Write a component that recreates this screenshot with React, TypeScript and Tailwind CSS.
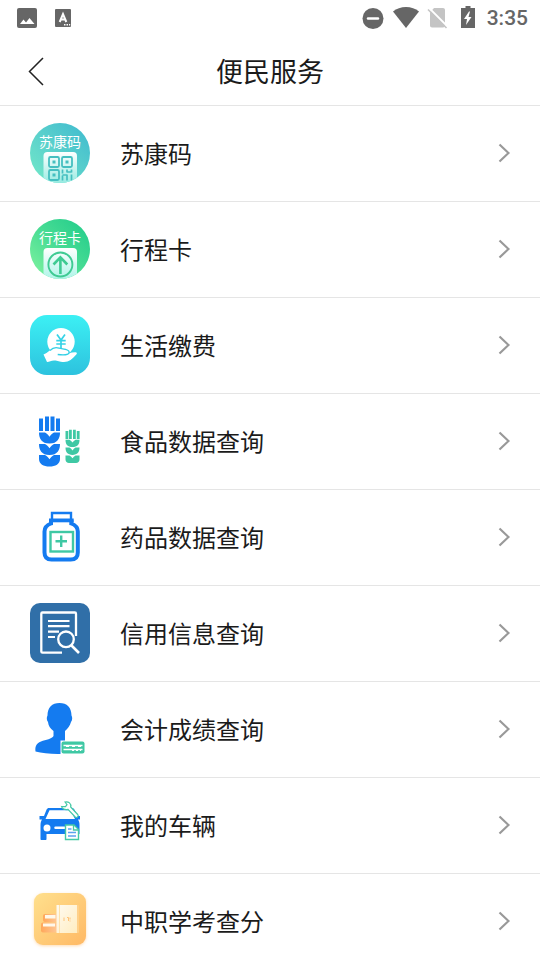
import React from "react";

function HealthCodeIcon() {
  return (
    <svg viewBox="0 0 60 60" className="size-[60px]" aria-hidden="true">
      <defs>
        <linearGradient id="hc-bg" x1="0" y1="1" x2="1" y2="0">
          <stop offset="0" stopColor="#74eac8" />
          <stop offset="0.5" stopColor="#5ad0cc" />
          <stop offset="1" stopColor="#3db9cf" />
        </linearGradient>
        <linearGradient id="hc-card" x1="0" y1="0" x2="0" y2="1">
          <stop offset="0" stopColor="#ffffff" />
          <stop offset="1" stopColor="#8ee9df" />
        </linearGradient>
        <clipPath id="hc-clip"><circle cx="30" cy="30" r="30" /></clipPath>
      </defs>
      <g clipPath="url(#hc-clip)">
        <rect width="60" height="60" fill="url(#hc-bg)" />
        <rect x="13.5" y="29" width="33.5" height="34" rx="4" fill="url(#hc-card)" />
        <g fill="none" stroke="#45bfc0" strokeWidth="1.8">
          <rect x="19" y="34" width="10" height="10" rx="1.5" />
          <rect x="32" y="34" width="10" height="10" rx="1.5" />
          <rect x="19" y="47" width="10" height="10" rx="1.5" />
        </g>
        <g fill="#45bfc0">
          <rect x="22.5" y="37.5" width="3" height="3" />
          <rect x="35.5" y="37.5" width="3" height="3" />
          <rect x="22.5" y="50.5" width="3" height="3" />
        </g>
        <path d="M32.500 46.500v4m0 2v5M37 46.500v3m0 2v6M41.500 46.500v3m0 2v6M32.500 52H37M37 49h4.500" fill="none" stroke="#45bfc0" strokeWidth="1.700" />
      </g>
      <text x="30" y="24" textAnchor="middle" fontSize="14" fill="#fff" fontFamily="'Noto Sans CJK SC', sans-serif">苏康码</text>
    </svg>
  );
}

function TravelCardIcon() {
  return (
    <svg viewBox="0 0 60 60" className="size-[60px]" aria-hidden="true">
      <defs>
        <linearGradient id="tc-bg" x1="0" y1="1" x2="1" y2="0">
          <stop offset="0" stopColor="#84f5a0" />
          <stop offset="0.5" stopColor="#48dc94" />
          <stop offset="1" stopColor="#1fcb8a" />
        </linearGradient>
        <linearGradient id="tc-card" x1="0" y1="0" x2="0" y2="1">
          <stop offset="0" stopColor="#ffffff" />
          <stop offset="1" stopColor="#a6f3e6" />
        </linearGradient>
        <clipPath id="tc-clip"><circle cx="30" cy="30" r="30" /></clipPath>
      </defs>
      <g clipPath="url(#tc-clip)">
        <rect width="60" height="60" fill="url(#tc-bg)" />
        <rect x="13.5" y="29" width="33.5" height="34" rx="4" fill="url(#tc-card)" />
        <g fill="none" stroke="#3fcb93" strokeWidth="2.6">
          <circle cx="30.4" cy="45.5" r="12" strokeWidth="1.9" />
          <path d="M30.4 55V38.500M23.500 45.500l6.900-7.200 6.900 7.200" />
        </g>
      </g>
      <text x="30" y="24" textAnchor="middle" fontSize="14" fill="#fff" fontFamily="'Noto Sans CJK SC', sans-serif">行程卡</text>
    </svg>
  );
}

function PaymentIcon() {
  return (
    <svg viewBox="0 0 60 60" className="size-[60px]" aria-hidden="true">
      <defs>
        <linearGradient id="pay-bg" x1="0" y1="0" x2="0" y2="1">
          <stop offset="0" stopColor="#3cf0f4" />
          <stop offset="1" stopColor="#2dc2de" />
        </linearGradient>
      </defs>
      <rect width="60" height="60" rx="17" fill="url(#pay-bg)" />
      <circle cx="31" cy="26.8" r="13.7" fill="#fff" />
      <path d="M27 19.5l4 5.500 4-5.500M31 25v8M26.300 25.600h9.400M26.300 29h9.400" fill="none" stroke="#35d3e7" strokeWidth="1.7" />
      <path
        d="M13.500 39.500C18 38 20 33.500 25.500 33c4-.3 6 1.500 9.500 1.700 3 .2 4.500 1.500 4 3.500 2.500-.3 5-1.200 7.300-.7.800.3.700 1.200 0 2C42.500 44 39 47 34 47c-5 0-6.500-1.700-10-1.500-3 .2-4.500 1.500-7 1.500z"
        fill="#fff"
      />
      <path d="M20 35.500c3-3 6-3.300 9-2.300 3.500 1.100 10 .3 10.200 4 0 3-6 3-11.500 2.300" fill="none" stroke="#31cfe5" strokeWidth="1.300" />
    </svg>
  );
}

function FoodIcon() {
  return (
    <svg viewBox="0 0 60 60" className="size-[60px]" aria-hidden="true">
      <g fill="#147bf0">
        <path d="M9 7.500h4v12.500H9zM15 5.500h4v14.500h-4zM20.500 5.500h4v14.500h-4zM26 7.500h4v12.500h-4z" />
        <path d="M9 21.500h6c1.500 1 3.500 2.500 4.500 4.300 1-1.800 3-3.300 4.500-4.300h6c0 6-2.500 11-10.500 11S9 27.500 9 21.500z" />
        <path d="M9 33h6c1.500 1 3.500 2.500 4.500 4.300 1-1.800 3-3.300 4.500-4.300h6c0 6-2.500 11-10.500 11S9 39 9 33z" />
        <path d="M9 44h6c1.500 1 3.500 2.500 4.500 4.300 1-1.800 3-3.300 4.500-4.300h6v4c0 5-4.500 7.500-10.500 7.500S9 53 9 48z" />
      </g>
      <g fill="#3fc8a4">
        <path d="M35.500 20h2.800v8h-2.800zM39 18.700h2.800v9.300H39zM43 18.700h2.800v9.300H43zM46.800 20h2.800v8h-2.800z" />
        <path d="M35.500 28.700h4c1.200.7 2.200 1.600 3 2.900.8-1.300 1.800-2.200 3-2.900h4c0 4.800-2.200 7.300-7 7.300s-7-2.500-7-7.300z" />
        <path d="M35.500 36.600h4c1.200.7 2.200 1.600 3 2.900.8-1.300 1.800-2.200 3-2.900h4c0 4.800-2.200 7.300-7 7.300s-7-2.500-7-7.300z" />
        <path d="M35.500 44.400h4c1.200.7 2.200 1.600 3 2.900.8-1.300 1.800-2.200 3-2.900h4v4c0 2-1.500 3.500-3.500 3.500h-7c-2 0-3.500-1.500-3.500-3.500z" />
      </g>
    </svg>
  );
}

function MedicineIcon() {
  return (
    <svg viewBox="0 0 60 60" className="size-[60px]" aria-hidden="true">
      <path d="M22 12.500V6h19v6.500" fill="none" stroke="#147bf0" strokeWidth="2.400" />
      <path d="M19 11.500h24.700v3.800H19z" fill="#147bf0" />
      <path
        d="M21 13v3.500c-4 1.500-6.500 3.500-6.500 8v21c0 4.500 2.500 7 7 7h19.300c4.500 0 7-2.500 7-7v-21c0-4.500-2.500-6.500-6.500-8V13"
        fill="none" stroke="#147bf0" strokeWidth="4"
      />
      <rect x="20.5" y="25" width="22.500" height="19.500" fill="none" stroke="#3fc8a4" strokeWidth="2.400" />
      <path d="M31.200 28.500v11.500M25.500 34.300h11.500" stroke="#3fc8a4" strokeWidth="2.400" />
    </svg>
  );
}

function CreditIcon() {
  return (
    <svg viewBox="0 0 60 60" className="size-[60px]" aria-hidden="true">
      <rect width="60" height="60" rx="10" fill="#306fa8" />
      <g fill="none" stroke="#fff">
        <path d="M32 49.700H12.500c-.7 0-1.200-.5-1.200-1.200V10.700c0-.7.500-1.200 1.200-1.200h32.300c.7 0 1.200.5 1.200 1.200V33" strokeWidth="2.300" />
        <path d="M18 18h21.500M18 23.200h21.500M18 28.600h11M18 34h7" strokeWidth="2.200" />
        <circle cx="36" cy="36.300" r="7.800" strokeWidth="2.300" />
        <path d="M41.500 42.500l7.500 7.500" strokeWidth="2.600" />
      </g>
    </svg>
  );
}

function AccountantIcon() {
  return (
    <svg viewBox="0 0 60 60" className="size-[60px]" aria-hidden="true">
      <path
        d="M29.500 4C37 4 41.500 8.500 41.500 16.500c1 2 1 4.500-.5 6.500-1.200 4-3 6.500-6 9v9.500H30.500V55C21 55.300 12 54 5.500 52.500c-.5-5 .5-8 5.500-10 5-2 11-2.500 12.500-5.500v-5C20 29.500 18.500 27 18 23c-1.500-2-1.500-4.500-.5-6.500C17.500 8.500 22 4 29.500 4z"
        fill="#147bf0"
      />
      <rect x="31.500" y="42.500" width="23" height="12" rx="2" fill="#3fc8a4" />
      <path d="M33.500 46.500h19M33.500 50.500h19" stroke="#fff" strokeWidth="1.300" />
      <path d="M36 47.500h3m3 0h3m3 0h3M42 51.500h2m2 0h2m2 0h1" stroke="#fff" strokeWidth="1" />
    </svg>
  );
}

function VehicleIcon() {
  return (
    <svg viewBox="0 0 60 60" className="size-[60px]" aria-hidden="true">
      <path
        fillRule="evenodd" fill="#147bf0"
        d="M19 13h23c1 0 2 .6 2.500 1.700l3 6.300h2.500v3.500h-2c1 1.500 1.500 3 1.500 5.500v9h-33v5c0 .6-.4 1-1 1h-4c-.6 0-1-.4-1-1V30c0-2.300.5-3.700 1.500-5.500H9.500V21h4.500l2.500-6.300c.5-1.100 1.500-1.700 2.500-1.700zM19.500 15.300L15.500 24h29.500l-4.500-8.700z"
      />
      <circle cx="17" cy="33" r="3.500" fill="#fff" />
      <path d="M25.500 32.700h9" stroke="#fff" strokeWidth="2.500" strokeLinecap="round" />
      <path
        d="M31.500 11.500l4 .2 1.500-2-2-2.700c3.500-.8 6.500 1.500 5.700 5l7 7.500c1.500 1.700-.8 4-2.500 2.500l-7.200-7.700c-3 .7-6-.3-6.500-2.800z"
        fill="#fff" stroke="#45c9a5" strokeWidth="1.200"
      />
      <path d="M35.500 30h8.500l4.500 4.500v10h-13z" fill="#fff" stroke="#45c9a5" strokeWidth="1.400" />
      <path d="M43.500 30v5h5" fill="none" stroke="#45c9a5" strokeWidth="1.300" />
      <path d="M38 34h3.500M38 37.500h8M38 41h8" stroke="#5ca3f0" strokeWidth="1.300" />
    </svg>
  );
}

function ExamIcon() {
  return (
    <svg viewBox="0 0 60 60" className="size-[60px] overflow-visible" aria-hidden="true">
      <defs>
        <linearGradient id="exam-bg" x1="0" y1="0" x2="1" y2="1">
          <stop offset="0" stopColor="#ffe08d" />
          <stop offset="1" stopColor="#ffb965" />
        </linearGradient>
        <linearGradient id="exam-page" x1="0" y1="0" x2="1" y2="1">
          <stop offset="0" stopColor="#fffaf0" />
          <stop offset="1" stopColor="#ffedc2" />
        </linearGradient>
        <linearGradient id="exam-spine" x1="0" y1="0" x2="1" y2="0">
          <stop offset="0" stopColor="#ffa75a" />
          <stop offset="1" stopColor="#ffc795" />
        </linearGradient>
        <filter id="exam-shadow" x="-20%" y="-20%" width="140%" height="140%">
          <feDropShadow dx="0" dy="1" stdDeviation="1.500" floodColor="#ffb866" floodOpacity="0.5" />
        </filter>
      </defs>
      <rect x="4" y="2" width="52" height="52" rx="9" fill="url(#exam-bg)" filter="url(#exam-shadow)" />
      <rect x="13" y="23" width="14" height="8" rx="2" fill="url(#exam-spine)" />
      <path d="M15 24h10.500v3.500H15z" fill="#fff8ea" />
      <rect x="11" y="31.500" width="16" height="10" rx="2" fill="url(#exam-spine)" />
      <path d="M13 32.500h12v3H13z" fill="#fff8ea" />
      <rect x="45" y="14" width="4" height="28" rx="1" fill="#ffd08a" />
      <rect x="26.500" y="14" width="20.500" height="28" fill="url(#exam-page)" />
      <path d="M29.500 14v28" stroke="#ffe2ad" strokeWidth="1" />
      <path d="M34 26.500v3.500M37 26.500h1.500v3.500M40 26.500v2m0 1v1" fill="none" stroke="#ffc278" strokeWidth="1" />
    </svg>
  );
}

const services = [
  { name: "苏康码", Icon: HealthCodeIcon },
  { name: "行程卡", Icon: TravelCardIcon },
  { name: "生活缴费", Icon: PaymentIcon },
  { name: "食品数据查询", Icon: FoodIcon },
  { name: "药品数据查询", Icon: MedicineIcon },
  { name: "信用信息查询", Icon: CreditIcon },
  { name: "会计成绩查询", Icon: AccountantIcon },
  { name: "我的车辆", Icon: VehicleIcon },
  { name: "中职学考查分", Icon: ExamIcon },
];

function StatusBar() {
  return (
    <div className="flex h-9 items-center justify-between pr-3 pl-4 text-[#666666]">
      <div className="flex items-center gap-4">
        <svg viewBox="0 0 22 22" className="size-[22px]" aria-hidden="true">
          <rect x="1" y="1" width="20" height="20" rx="2" fill="currentColor" />
          <path d="M4 17l3.500-4.500 2.500 3L13.500 11l5 6z" fill="#fff" />
        </svg>
        <svg viewBox="0 0 18 18" className="size-[18px]" aria-hidden="true">
          <rect x="1" y="0" width="16" height="18" rx="1" fill="currentColor" />
          <path d="M5.700 13l3.300-8 3.300 8M7 10.500h4" fill="none" stroke="#fff" strokeWidth="2" />
          <path d="M10 15.800h1.500m1 0h1.500m1 0h1.200" stroke="#fff" strokeWidth="1.500" />
        </svg>
      </div>
      <div className="flex items-center gap-2">
        <svg viewBox="0 0 24 24" className="size-6" aria-hidden="true">
          <circle cx="12" cy="12.500" r="10.500" fill="currentColor" />
          <path d="M7 12.500h10" stroke="#fff" strokeWidth="2.400" strokeLinecap="round" />
        </svg>
        <svg viewBox="0 0 26 24" className="h-6 w-[26px]" aria-hidden="true">
          <path d="M0 5.500C3.500 2.500 8 1 13 1s9.500 1.500 13 4.500L13 22z" fill="currentColor" />
        </svg>
        <svg viewBox="2 0 24 24" className="size-6" aria-hidden="true">
          <path d="M9 2h9c1.100 0 2 .9 2 2v15.500c0 1.100-.9 2-2 2H7c-1.100 0-2-.9-2-2V6.500z" fill="#c4c4c4" />
          <path d="M4 2l18 18" stroke="#fff" strokeWidth="2" />
          <path d="M3 3.500l18.500 18.500" stroke="#c4c4c4" strokeWidth="1.600" />
        </svg>
        <svg viewBox="0 0 20 24" className="h-6 w-5" aria-hidden="true">
          <path d="M6.500 0h5v2H16v20H2V2h4.500z" fill="currentColor" />
          <path d="M10 5.500l-5 7.500h3l-1 6 5.500-8H9.500L11 5.500z" fill="#fff" />
        </svg>
        <time className="font-[Roboto,sans-serif] text-[21px] leading-6 font-medium">3:35</time>
      </div>
    </div>
  );
}

export default function App() {
  return (
    <div className="flex h-screen flex-col bg-white font-['Noto_Sans_CJK_SC',sans-serif] text-[#1b1b1b]">
      <StatusBar />
      <header className="grid h-[70px] shrink-0 grid-cols-[72px_1fr_72px] items-center border-b border-[#e5e5e5]">
        <button type="button" aria-label="返回" className="flex h-full items-center pl-7">
          <svg viewBox="0 0 18 30" className="h-[30px] w-[18px]" aria-hidden="true">
            <path d="M15 2L1.500 15.500 15 29" fill="none" stroke="#222" strokeWidth="1.500" />
          </svg>
        </button>
        <h1 className="text-center text-[27px] leading-10">便民服务</h1>
      </header>
      <ul className="min-h-0 flex-1 overflow-y-auto [scrollbar-width:none]">
        {services.map(({ name, Icon }) => (
          <li key={name} className="border-b border-[#e5e5e5]">
            <button type="button" className="flex w-full items-center px-[30px] pt-[17px] pb-[18px] text-left">
              <Icon />
              <span className="ml-[30px] flex-1 text-2xl">{name}</span>
              <svg viewBox="0 0 12 20" className="h-5 w-3" aria-hidden="true">
                <path d="M1.500 1.500l9 8.500-9 8.500" fill="none" stroke="#999" strokeWidth="2.200" />
              </svg>
            </button>
          </li>
        ))}
      </ul>
    </div>
  );
}
